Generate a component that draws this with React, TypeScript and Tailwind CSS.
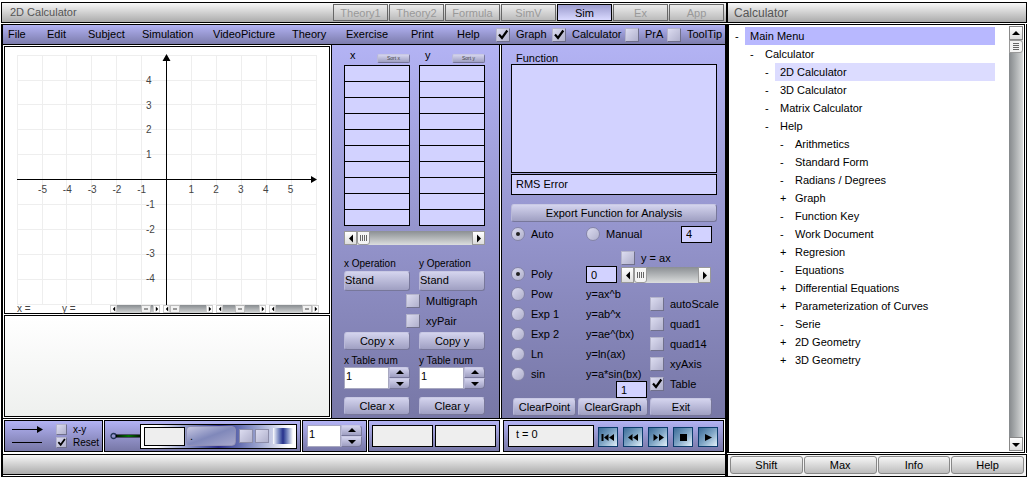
import { useId } from "react";
import type { ReactNode } from "react";
import clsx from "clsx";

const raised =
  "border border-t-[#c9c9e4] border-l-[#b9b9d8] border-r-[#77779a] border-b-[#77779a] bg-linear-to-b from-[#d4d4ee] to-[#9f9fc2]";

function Check({ label, checked, small, className }: { label: string; checked?: boolean; small?: boolean; className?: string }) {
  return (
    <label className={clsx("flex items-center whitespace-nowrap", small ? "h-[13px] gap-[6px] text-[10px]" : "h-5 gap-[6px]", className)}>
      <span className="grid shrink-0">
        <input
          type="checkbox"
          defaultChecked={checked}
          className={clsx(
            "peer col-start-1 row-start-1 appearance-none border border-t-[#b5b5cc] border-l-[#b5b5cc] border-r-[#70708c] border-b-[#70708c] bg-linear-to-br from-[#dcdcf0] to-[#b0b0cc]",
            small ? "size-[11px]" : "size-[14px]",
          )}
        />
        <svg viewBox="0 0 14 14" className={clsx("pointer-events-none invisible col-start-1 row-start-1 peer-checked:visible", small ? "size-[11px]" : "size-[14px]")}>
          <path d="M3 6.5 L6 10 L11.3 2.5" fill="none" stroke="#000" strokeWidth="2.2" />
        </svg>
      </span>
      {label}
    </label>
  );
}

function Radio({ label, name, checked, className }: { label: string; name: string; checked?: boolean; className?: string }) {
  return (
    <label className={clsx("flex h-5 items-center gap-[6px] whitespace-nowrap", className)}>
      <span className="grid shrink-0 place-items-center">
        <input
          type="radio"
          name={name}
          defaultChecked={checked}
          className="peer col-start-1 row-start-1 size-[14px] appearance-none rounded-full border border-[#8585a8] bg-linear-to-br from-[#dcdcf0] to-[#b0b0cc]"
        />
        <span className="pointer-events-none invisible col-start-1 row-start-1 size-1 rounded-full bg-[#222] peer-checked:visible" />
      </span>
      {label}
    </label>
  );
}

function Push({ children, className }: { children: ReactNode; className?: string }) {
  return (
    <button type="button" className={clsx("h-[18px] rounded-[3px] pt-px text-center leading-none whitespace-nowrap", raised, className)}>
      {children}
    </button>
  );
}

function Tri({ dir, className }: { dir: "up" | "down" | "left" | "right"; className?: string }) {
  const d = {
    up: "M1 6 L5 2 L9 6 Z",
    down: "M1 3 L5 7 L9 3 Z",
    left: "M7 0.5 L3 4.5 L7 8.5 Z",
    right: "M3 0.5 L7 4.5 L3 8.5 Z",
  }[dir];
  return (
    <svg viewBox="0 0 10 9" className={clsx("block", className)} aria-hidden="true">
      <path d={d} fill="#000" />
    </svg>
  );
}

function HScroll({ label, className }: { label: string; className?: string }) {
  const end = "grid w-[13px] shrink-0 place-items-center border border-[#999] bg-linear-to-b from-white to-[#ddd]";
  return (
    <div role="group" aria-label={label} className={clsx("flex bg-linear-to-b from-[#8b8f93] to-[#dcdede]", className)}>
      <button type="button" aria-label={label + " left"} className={end}>
        <Tri dir="left" className="h-[9px] w-[10px]" />
      </button>
      <span className="flex w-[13px] items-center justify-center gap-px rounded-b-[3px] border border-[#999] bg-[#f4f4f4]">
        <i className="h-[6px] w-px bg-[#666]" />
        <i className="h-[6px] w-px bg-[#666]" />
        <i className="h-[6px] w-px bg-[#666]" />
        <i className="h-[6px] w-px bg-[#666]" />
      </span>
      <button type="button" aria-label={label + " right"} className={clsx(end, "ml-auto")}>
        <Tri dir="right" className="h-[9px] w-[10px]" />
      </button>
    </div>
  );
}

function MiniScroll({ label, before }: { label: string; before: string }) {
  return (
    <div role="group" aria-label={label} className="flex h-2 w-[50px] bg-linear-to-b from-[#888c90] to-[#d4d6d6]">
      <button type="button" aria-label={label + " left"} className="grid w-[7px] place-items-center border border-[#ccc] bg-white">
        <Tri dir="left" className="h-[6px] w-[6px]" />
      </button>
      <span className={before} />
      <span className="grid w-[10px] place-items-center border border-[#bbb] bg-[#f2f2f2]">
        <i className="h-[2px] w-1 bg-[#999]" />
      </span>
      <button type="button" aria-label={label + " right"} className="ml-auto grid w-[7px] place-items-center border border-[#ccc] bg-white">
        <Tri dir="right" className="h-[6px] w-[6px]" />
      </button>
    </div>
  );
}

function Stepper({ label, id, className }: { label?: string; id: string; className?: string }) {
  return (
    <div className={clsx("flex h-[22px]", className)}>
      <input id={id} aria-label={label} defaultValue="1" className="w-0 min-w-0 flex-1 border border-[#a8a8c0] bg-white pb-1 pl-px leading-none" />
      <div className="flex w-[21px] flex-col">
        <button type="button" aria-label="Increase" className={clsx("grid flex-1 place-items-center rounded-tr-[4px]", raised)}>
          <Tri dir="up" className="h-[9px] w-[10px]" />
        </button>
        <button type="button" aria-label="Decrease" className={clsx("grid flex-1 place-items-center rounded-br-[4px]", raised)}>
          <Tri dir="down" className="h-[9px] w-[10px]" />
        </button>
      </div>
    </div>
  );
}

function Graph() {
  const xs = [12, 37, 61, 86, 111, 136, 161, 186, 211, 236, 261, 286, 311];
  const ys = [8, 33, 57, 82, 107, 132, 157, 182, 207, 232, 257];
  return (
    <svg viewBox="0 0 324 258" className="block w-full font-['Liberation_Sans',sans-serif] text-[10px]" role="img" aria-label="Graph">
      <g stroke="#eee" shapeRendering="crispEdges">
        {xs.map((x) => (
          <path key={x} d={`M${x + 0.5} 8V258`} />
        ))}
        {ys.map((y) => (
          <path key={y} d={`M12 ${y + 0.5}H312`} />
        ))}
      </g>
      <path d="M161.5 10V258M12 132.5H308" stroke="#000" shapeRendering="crispEdges" />
      <path d="M161.5 7L165.5 14H157.5ZM312 132.5L306 129V136Z" fill="#000" />
      <g fill="#444">
        {[-5, -4, -3, -2, -1, 1, 2, 3, 4, 5].map((n) => (
          <text key={n} x={161.5 + n * 24.8} y="146" textAnchor="middle">
            {n}
          </text>
        ))}
        {[4, 3, 2, 1, -1, -2, -3, -4].map((n) => (
          <text key={n} x="141" y={136 - n * 24.8}>
            {n}
          </text>
        ))}
      </g>
    </svg>
  );
}

const menus = ["File", "Edit", "Subject", "Simulation", "VideoPicture", "Theory", "Exercise", "Print", "Help"];
const tabs = ["Theory1", "Theory2", "Formula", "SimV", "Sim", "Ex", "App"];
const models = [
  ["Pow", "y=ax^b"],
  ["Exp 1", "y=ab^x"],
  ["Exp 2", "y=ae^(bx)"],
  ["Ln", "y=ln(ax)"],
  ["sin", "y=a*sin(bx)"],
];
const tree: [string, string, string][] = [
  ["-", "Main Menu", "pl-0"],
  ["-", "Calculator", "pl-[15px]"],
  ["-", "2D Calculator", "pl-[30px]"],
  ["-", "3D Calculator", "pl-[30px]"],
  ["-", "Matrix Calculator", "pl-[30px]"],
  ["-", "Help", "pl-[30px]"],
  ["-", "Arithmetics", "pl-[45px]"],
  ["-", "Standard Form", "pl-[45px]"],
  ["-", "Radians / Degrees", "pl-[45px]"],
  ["+", "Graph", "pl-[45px]"],
  ["-", "Function Key", "pl-[45px]"],
  ["-", "Work Document", "pl-[45px]"],
  ["+", "Regresion", "pl-[45px]"],
  ["-", "Equations", "pl-[45px]"],
  ["+", "Differential Equations", "pl-[45px]"],
  ["+", "Parameterization of Curves", "pl-[45px]"],
  ["-", "Serie", "pl-[45px]"],
  ["+", "2D Geometry", "pl-[45px]"],
  ["+", "3D Geometry", "pl-[45px]"],
];
const players: [string, ReactNode][] = [
  ["Rewind to start", <path key="p" d="M2.5 6h2v7h-2zM9.5 6v7L5 9.5zM15 6v7l-5-3.5z" />],
  ["Step back", <path key="p" d="M8.5 6v7L4 9.5zM14 6v7L9 9.5z" />],
  ["Step forward", <path key="p" d="M4.5 6v7L9 9.5zM10 6v7l5-3.5z" />],
  ["Stop", <path key="p" d="M6 6h7v7H6z" />],
  ["Play", <path key="p" d="M6 6v7l7-3.5z" />],
];

const panel = "bg-linear-to-b from-[#b3b3f4] to-[#7777a6]";
const tool = "flex h-8 items-center border border-black bg-linear-to-b from-[#b3b3f4] to-[#7777a6]";
const silver = "border border-black bg-linear-to-b from-[#f8f8f8] to-[#ababab]";

function DataColumn({ axis }: { axis: string }) {
  return (
    <div className="flex-1">
      <div className="flex h-5 items-center justify-between pl-[6px]">
        <span>{axis}</span>
        <button type="button" className={clsx("mt-[6px] h-[9px] w-[33px] rounded-[2px] text-[5px] leading-none text-[#444]", raised)}>
          Sort {axis}
        </button>
      </div>
      <table className="w-full border-collapse" aria-label={axis + " values"}>
        <tbody>
          {Array.from({ length: 10 }, (_, i) => (
            <tr key={i}>
              <td className="h-4 border border-black bg-[#d2d2ff] p-0" />
            </tr>
          ))}
        </tbody>
      </table>
    </div>
  );
}

function AxisOperation({ axis }: { axis: string }) {
  const id = useId();
  return (
    <div className="flex flex-1 flex-col">
      <label htmlFor={id} className="h-[14px] text-[10px] leading-[14px] whitespace-nowrap">
        {axis} Operation
      </label>
      <select id={id} className={clsx("h-5 appearance-none rounded-[3px] pb-[2px] leading-none", raised)}>
        <option>Stand</option>
      </select>
    </div>
  );
}

function AxisTable({ axis }: { axis: string }) {
  const id = useId();
  return (
    <div className="flex w-0 flex-1 flex-col">
      <Push>Copy {axis}</Push>
      <label htmlFor={id} className="mt-1 h-[13px] text-[10px] leading-[14px] whitespace-nowrap">
        {axis} Table num
      </label>
      <Stepper id={id} />
      <Push className="mt-2">Clear {axis}</Push>
    </div>
  );
}

export default function App() {
  const numField = "h-[17px] w-[31px] border border-black bg-[#d2d2ff] pl-1 leading-none";
  const penOption = "size-[14px] shrink-0 appearance-none border border-[#8c8ca8] bg-linear-to-br from-[#dcdcf0] to-[#b0b0cc]";
  return (
    <div className="flex min-h-[477px] w-full bg-white pt-[2px] pr-[2px] pl-px font-['Liberation_Sans',Arial,sans-serif] text-[11px] leading-none text-black">
      <main className="flex min-w-0 flex-1 flex-col border-b border-black">
        <header className={clsx("flex h-[21px] items-center pr-[2px] pl-2", silver)}>
          <h1 className="flex-1 text-[#555]">2D Calculator</h1>
          <nav className="flex gap-px">
            {tabs.map((t) => (
              <button
                key={t}
                type="button"
                className={clsx(
                  "h-[17px] w-[55px] border pt-px",
                  t === "Sim" ? "border-black bg-linear-to-b from-[#9c9cce] to-[#dadaff]" : "border-[#666] bg-linear-to-b from-[#ededed] to-[#bbb] text-[#999]",
                )}
              >
                {t}
              </button>
            ))}
          </nav>
        </header>

        <div className="mt-px flex flex-1 flex-col border-x-2 border-black">
          <div className="flex h-[21px] items-center border-y border-black bg-linear-to-b from-[#b3b3f4] to-[#7c7cac] pl-[5px]">
            <nav className="grid grid-cols-[39px_41px_54px_71px_79px_54px_65px_46px_22px]">
              {menus.map((m) => (
                <button key={m} type="button" className="text-left whitespace-nowrap">
                  {m}
                </button>
              ))}
            </nav>
            <div className="ml-auto grid grid-cols-[56px_73px_42px_58px]">
              <Check label="Graph" checked />
              <Check label="Calculator" checked />
              <Check label="PrA" />
              <Check label="ToolTip" />
            </div>
          </div>

          <div className="flex flex-1 border-b border-black">
            <section className="flex min-w-0 flex-1 flex-col gap-px p-px">
              <div className="border border-black bg-white">
                <Graph />
                <div className="flex h-2 items-center pr-[10px] pl-3 text-[10px] leading-[8px] text-[#444]">
                  <span className="w-[45px]">x =</span>
                  <span className="w-12">y =</span>
                  <div className="ml-auto flex gap-[3px]">
                    <MiniScroll label="x min" before="w-[24px]" />
                    <MiniScroll label="x max" before="w-0" />
                    <MiniScroll label="y min" before="w-[12px]" />
                    <MiniScroll label="y max" before="w-[26px]" />
                  </div>
                </div>
              </div>
              <div className="flex-1 border border-black bg-linear-to-b from-white to-[#eef0ee]" />
            </section>

            <section className={clsx("flex w-[169px] flex-col border-x border-black pr-[14px] pl-3", panel)}>
              <div className="flex gap-[9px]">
                <DataColumn axis="x" />
                <DataColumn axis="y" />
              </div>
              <HScroll label="Table position" className="mt-[5px] h-[14px]" />
              <div className="mt-3 flex gap-[9px]">
                <AxisOperation axis="x" />
                <AxisOperation axis="y" />
              </div>
              <div className="flex flex-col pl-[62px]">
                <Check label="Multigraph" />
                <Check label="xyPair" />
              </div>
              <div className="mt-px flex gap-[9px]">
                <AxisTable axis="x" />
                <AxisTable axis="y" />
              </div>
            </section>

            <section className={clsx("ml-px flex w-[224px] flex-col border-l border-black pr-2 pl-[9px]", panel)}>
              <label htmlFor="fn" className="h-[19px] pt-2 pl-[5px]">
                Function
              </label>
              <textarea id="fn" className="h-[109px] w-full resize-none border border-black bg-[#d2d2ff]" />
              <div className="mt-px h-[21px] border border-black bg-[#d2d2ff] pt-1 pl-1">RMS Error</div>
              <Push className="mt-[9px]">Export Function for Analysis</Push>
              <div className="mt-[2px] flex items-center">
                <Radio name="mode" label="Auto" checked className="w-[75px]" />
                <Radio name="mode" label="Manual" className="w-[95px]" />
                <input aria-label="Manual value" defaultValue="4" className={numField} />
              </div>
              <div className="mt-1 flex h-9 items-end">
                <Radio name="model" label="Poly" checked className="w-[75px]" />
                <input aria-label="Degree" defaultValue="0" className={clsx(numField, "mb-px")} />
                <div className="ml-[4px] flex flex-col pb-px">
                  <Check label="y = ax" className="h-[18px]" />
                  <HScroll label="Degree" className="h-4 w-[90px]" />
                </div>
              </div>
              <div className="flex">
                <fieldset className="flex w-[139px] shrink-0 flex-col">
                  {models.map(([name, formula]) => (
                    <div key={name} className="flex items-center">
                      <Radio name="model" label={name} className="w-[75px]" />
                      <span>{formula}</span>
                    </div>
                  ))}
                  <input aria-label="b value" defaultValue="1" className={clsx(numField, "-mt-[3px] mr-[3px] self-end")} />
                </fieldset>
                <div className="flex flex-col pt-[10px]">
                  <Check label="autoScale" />
                  <Check label="quad1" />
                  <Check label="quad14" />
                  <Check label="xyAxis" />
                  <Check label="Table" checked />
                </div>
              </div>
              <div className="mt-auto mb-[2px] flex gap-[2px] pl-[2px]">
                <Push className="w-[63px]">ClearPoint</Push>
                <Push className="w-[70px]">ClearGraph</Push>
                <Push className="w-[62px]">Exit</Push>
              </div>
            </section>
          </div>

          <div className="flex gap-px p-px">
            <div className={clsx(tool, "w-[99px] gap-[13px] pl-[7px]")}>
              <svg viewBox="0 0 31 20" className="h-5 w-[31px]" aria-hidden="true">
                <path d="M0 3.5H28M0 16.5H30" stroke="#000" shapeRendering="crispEdges" />
                <path d="M31 3.5L25 0V7Z" />
              </svg>
              <div>
                <Check small label="x-y" />
                <Check small label="Reset" checked />
              </div>
            </div>
            <div className={clsx(tool, "min-w-0 flex-1 pr-[3px] pl-[5px]")}>
              <svg viewBox="0 0 30 8" className="h-2 w-[30px] shrink-0" aria-hidden="true">
                <defs>
                  <linearGradient id="wire">
                    <stop offset="0" stopColor="#043804" />
                    <stop offset="0.5" stopColor="#00e000" />
                    <stop offset="1" stopColor="#043804" />
                  </linearGradient>
                </defs>
                <circle cx="3.5" cy="4" r="2.5" fill="none" stroke="#223355" strokeWidth="1.3" />
                <path d="M6 4H30" stroke="#000" strokeWidth="3" />
                <rect x="7" y="3.5" width="23" height="1" fill="url(#wire)" />
              </svg>
              <div className="flex h-[25px] min-w-0 flex-1 items-center border border-black bg-linear-to-r from-white from-10% via-[#30308c] to-white to-95% px-[3px]">
                <input aria-label="Pen value" className="h-[19px] w-[41px] border border-black bg-[#eee]" />
                <button
                  type="button"
                  className="ml-px h-5 w-[50px] rounded-[4px] border border-[#8f8fb5] bg-linear-to-br from-[#c8c8e2] via-[#8088ba] to-[#a8a8cc] pl-[3px] text-left"
                >
                  .
                </button>
                <input type="checkbox" aria-label="Pen option one" className={clsx(penOption, "ml-[3px]")} />
                <input type="checkbox" aria-label="Pen option two" className={clsx(penOption, "ml-[2px]")} />
                <span className="ml-auto h-4 w-5 bg-linear-to-r from-white via-[#28308c] to-white" />
              </div>
            </div>
            <div className={clsx(tool, "w-[65px] px-1")}>
              <Stepper id="pen-size" label="Pen size" className="flex-1" />
            </div>
            <div className={clsx(tool, "w-[132px] gap-[2px] px-[3px]")}>
              <input aria-label="Result one" className="h-[22px] min-w-0 flex-1 border border-black bg-[#eee]" />
              <input aria-label="Result two" className="h-[22px] min-w-0 flex-1 border border-black bg-[#eee]" />
            </div>
            <div className={clsx(tool, "ml-[2px] w-[221px] pr-[5px] pl-1")}>
              <input aria-label="Time" defaultValue="t = 0" className="h-[22px] w-[86px] border border-black bg-[#eee] pb-1 pl-[7px]" />
              <div className="ml-auto flex gap-[5px] pt-px">
                {players.map(([name, d]) => (
                  <button
                    key={name}
                    type="button"
                    aria-label={name}
                    className="size-5 border border-[#0c3c6c] bg-linear-to-br from-[#3c6c98] via-[#7ea4c4] to-[#e4f2fa]"
                  >
                    <svg viewBox="0 0 18 18" className="size-[18px]">
                      {d}
                    </svg>
                  </button>
                ))}
              </div>
            </div>
          </div>
          <footer className="mt-px mb-px h-[21px] border-y border-black bg-linear-to-b from-[#f8f8f8] to-[#ababab]" />
        </div>
      </main>

      <aside className="flex w-[300px] flex-col border-b border-black">
        <h2 className={clsx("flex h-[21px] items-center pl-[6px] text-[12px] text-[#555]", silver)}>Calculator</h2>
        <div className="mt-px flex flex-1 flex-col border-x border-black pr-px">
          <div className="flex flex-1 border border-black p-px">
            <ul className="flex-1 pt-px pr-[14px] pl-[5px]">
              {tree.map(([mark, text, indent]) => (
                <li key={text} className={clsx("flex h-[18px]", indent)}>
                  <span className="w-[10px] leading-[18px]">{mark}</span>
                  <a
                    href="#tree"
                    className={clsx("flex-1 pl-[5px] leading-[18px]", text === "Main Menu" && "bg-[#b8b8ff]", text === "2D Calculator" && "bg-[#dcdcff]")}
                  >
                    {text}
                  </a>
                </li>
              ))}
            </ul>
            <div role="group" aria-label="Menu scroll" className="flex w-[14px] flex-col bg-linear-to-r from-[#85898c] to-[#d8dada]">
              <button type="button" aria-label="Scroll up" className="grid h-[14px] place-items-center border border-[#888] bg-linear-to-b from-white to-[#ddd]">
                <Tri dir="up" className="h-[9px] w-[10px]" />
              </button>
              <span className="flex h-[13px] flex-col items-center justify-center gap-px rounded-r-[3px] border border-[#999] bg-[#f4f4f4]">
                <i className="h-px w-[6px] bg-[#666]" />
                <i className="h-px w-[6px] bg-[#666]" />
                <i className="h-px w-[6px] bg-[#666]" />
                <i className="h-px w-[6px] bg-[#666]" />
              </span>
              <button type="button" aria-label="Scroll down" className="mt-auto grid h-[14px] place-items-center border border-[#888] bg-linear-to-b from-white to-[#ddd]">
                <Tri dir="down" className="h-[9px] w-[10px]" />
              </button>
            </div>
          </div>
        </div>
        <div className="mt-px flex h-[22px] gap-px border border-b-0 border-black bg-[#f4f4f4] px-[2px] pt-px pb-[2px]">
          {["Shift", "Max", "Info", "Help"].map((b) => (
            <button key={b} type="button" className="flex-1 rounded-[3px] border border-[#888] bg-linear-to-b from-[#f6f6f6] to-[#bdbdbd]">
              {b}
            </button>
          ))}
        </div>
      </aside>
    </div>
  );
}
